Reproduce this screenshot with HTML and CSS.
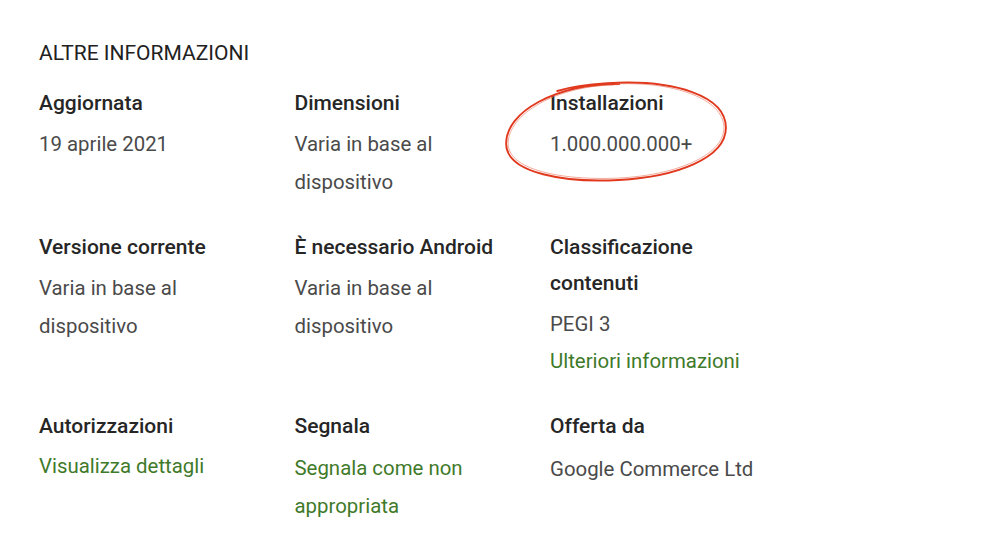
FILE: index.html
```html
<!DOCTYPE html>
<html lang="it">
<head>
  <meta charset="UTF-8">
  <meta name="viewport" content="width=device-width, initial-scale=1.0">
  <title>Altre informazioni</title>
  <link rel="stylesheet" href="styles.css">
</head>
<body>
  <section class="info">
    <h2 class="info-title">ALTRE INFORMAZIONI</h2>

    <div class="info-grid">
      <div class="info-item">
        <div class="info-label">Aggiornata</div>
        <div class="info-value">19 aprile 2021</div>
      </div>
      <div class="info-item">
        <div class="info-label">Dimensioni</div>
        <div class="info-value">Varia in base al dispositivo</div>
      </div>
      <div class="info-item highlighted">
        <div class="info-label">Installazioni</div>
        <div class="info-value">1.000.000.000+</div>
        <!-- hand drawn circle around the installs -->
        <svg class="scribble" width="240" height="112" viewBox="0 0 240 112">
          <path d="M124 6 C60 5 10 32 10 64 C10 94 70 104 122 102 C180 100 229 82 230 52 C231 20 180 2 112 5 C90 6 72 9 62 12"
                fill="none" stroke="#e0391e" stroke-width="1.9" stroke-linecap="round"/>
          <path d="M118 7 C62 7 12 34 12 64 C12 92 72 102 124 100 C178 98 227 80 228 52 C229 22 176 4 120 6"
                fill="none" stroke="#e86a50" stroke-width="0.8" opacity="0.7"/>
        </svg>
      </div>

      <div class="info-item">
        <div class="info-label">Versione corrente</div>
        <div class="info-value">Varia in base al dispositivo</div>
      </div>
      <div class="info-item">
        <div class="info-label">È necessario Android</div>
        <div class="info-value">Varia in base al dispositivo</div>
      </div>
      <div class="info-item">
        <div class="info-label">Classificazione contenuti</div>
        <div class="info-value">
          <div>PEGI 3</div>
          <a href="#rating" class="info-link">Ulteriori informazioni</a>
        </div>
      </div>

      <div class="info-item">
        <div class="info-label">Autorizzazioni</div>
        <div class="info-value"><a href="#permissions" class="info-link">Visualizza dettagli</a></div>
      </div>
      <div class="info-item">
        <div class="info-label">Segnala</div>
        <div class="info-value report"><a href="#report" class="info-link">Segnala come non appropriata</a></div>
      </div>
      <div class="info-item">
        <div class="info-label">Offerta da</div>
        <div class="info-value report">Google Commerce Ltd</div>
      </div>
    </div>
  </section>
</body>
</html>
```

FILE: styles.css
```css
* {
  padding: 0;
  margin: 0;
  box-sizing: border-box;
}

body {
  font-family: Roboto, "Liberation Sans", Arial, sans-serif;
  background-color: #fff;
  color: #333;
}

.info {
  padding: 39px 0 0 39px;
}

.info-title {
  font-size: 21px;
  font-weight: 400;
  line-height: 28px;
  color: #212121;
  margin-bottom: 18px;
}

.info-grid {
  display: grid;
  grid-template-columns: repeat(3, 255.5px);
  row-gap: 28px;
}

.info-item {
  width: 222px;
}

.info-label {
  font-size: 21px;
  font-weight: 500;
  line-height: 36px;
  color: #262626;
}

.info-value {
  font-size: 20.4px;
  line-height: 38px;
  color: #4a4a4a;
  margin-top: 4px;
}

.info-value.report {
  margin-top: 6px;
}

.info-link {
  color: #3f7a2a;
  text-decoration: none;
  display: block;
  margin-top: -1px;
}

.highlighted {
  position: relative;
}

/* red marker circle, sits over the text */
.scribble {
  position: absolute;
  left: -54px;
  top: -7px;
  transform: rotate(-1deg);
  pointer-events: none;
}
```
